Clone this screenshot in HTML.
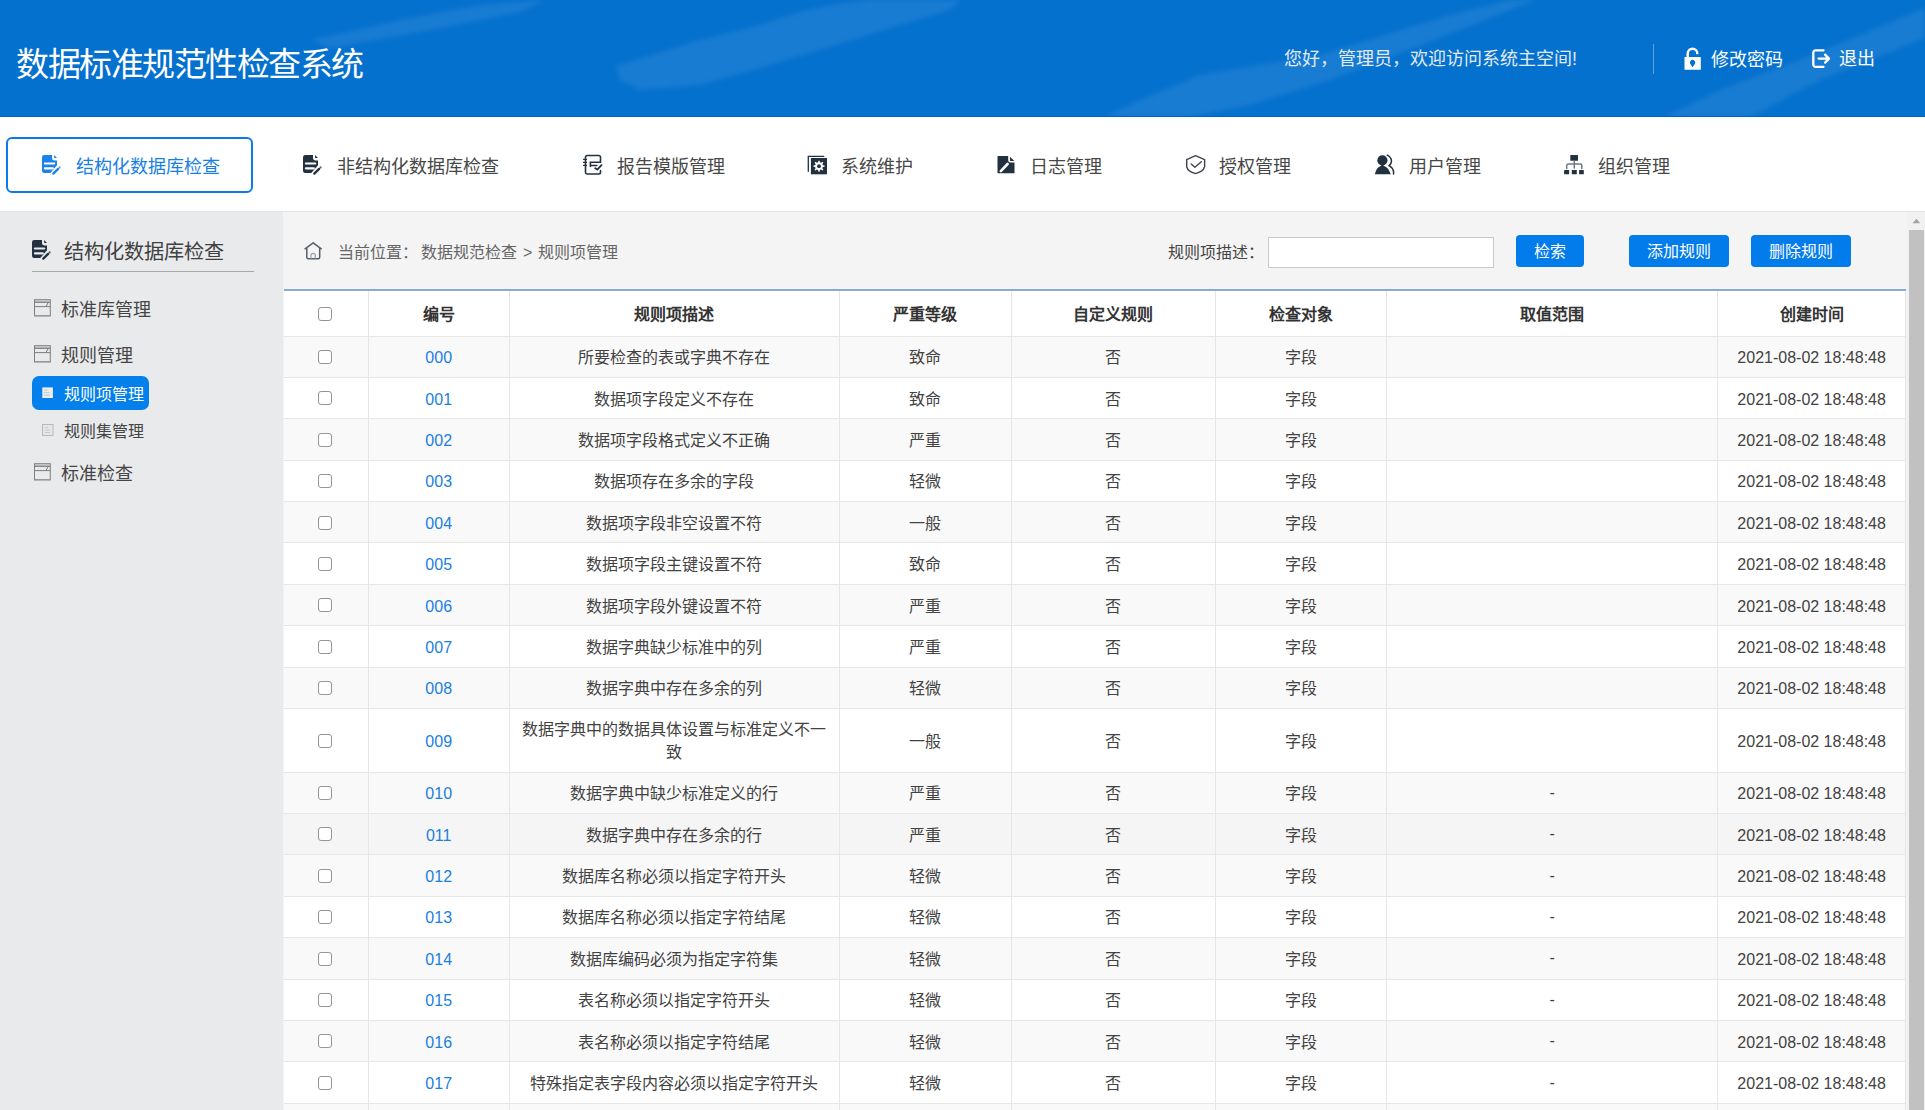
<!DOCTYPE html>
<html lang="zh-CN"><head><meta charset="utf-8">
<style>
*{box-sizing:border-box}
html,body{margin:0;padding:0;width:1925px;height:1110px;overflow:hidden;font-family:"Liberation Sans",sans-serif;background:#f4f4f4}
.abs{position:absolute;white-space:nowrap}
#hdr{position:absolute;left:0;top:0;width:1925px;height:117px;background:#0571ce;overflow:hidden;border-bottom:1px solid #0061c6}
#hdr svg.bg{position:absolute;left:0;top:0}
#title{left:16px;top:40.5px;font-size:33px;letter-spacing:-1.5px;color:#fff;line-height:48px}
.hw{font-size:18px;color:#e2eaf4;line-height:26px}
#nav{position:absolute;left:0;top:117px;width:1925px;height:95px;background:#fff;border-bottom:1px solid #e5e5e6}
.tab{font-size:18px;color:#474747;line-height:26px}
#act{position:absolute;left:6px;top:137px;width:247px;height:56px;border:2px solid #0b7be9;border-radius:6px}
#side{position:absolute;left:0;top:212px;width:283px;height:898px;background:#e9eaec}
.si{font-size:18px;color:#454545;line-height:26px}
#main{position:absolute;left:283px;top:212px;width:1624px;height:898px;background:#f4f4f4}
.btn{position:absolute;top:235px;height:32px;background:#037ceb;border-radius:4px;color:#fff;font-size:16px;line-height:34px;text-align:center}
#tbl{position:absolute;left:284px;top:289px;border-collapse:collapse;table-layout:fixed;border-top:2px solid #86abd8;background:#fff}
#tbl td,#tbl th{border:1px solid #e6e6e6;padding:2px 0 0 0;text-align:center;font-size:16px;color:#424242;line-height:23px;white-space:nowrap;overflow:hidden}
#tbl th{height:46px;font-weight:bold;border-top:none;color:#333;padding-top:3px}
#tbl tr.odd td{background:#f9f9f9}
#tbl tr.even td{background:#fff}
#tbl tr.hov td{background:#f5f5f5}
#tbl td:first-child,#tbl th:first-child{border-left:none}
#tbl td{height:41.4px}
#tbl tr.tall td{height:63.6px}
#tbl td.lnk{color:#1a7fe0}
.dash{position:relative;top:-1.5px}
.cb{display:inline-block;position:relative;left:-1px;top:-2px;width:14px;height:14px;border:1px solid #959595;border-radius:3px;background:#fff;vertical-align:middle}
#sb{position:absolute;left:1907px;top:212px;width:18px;height:898px;background:#f1f1f1}
#thumb{position:absolute;left:1909px;top:230px;width:15px;height:880px;background:#c1c1c1}
</style></head><body>

<div id="hdr">
<svg class="bg" width="1925" height="117" viewBox="0 0 1925 117">
  <defs><filter id="bl"><feGaussianBlur stdDeviation="2"/></filter></defs>
  <g fill="#ffffff" fill-opacity="0.075" filter="url(#bl)">
    <path d="M312 40 L400 20 L480 5 L545 0 L520 12 L420 32 L330 48 Z"/>
    <path d="M616 66 L700 40 L760 25 L800 12 L830 5 L870 0 L960 0 L950 10 L900 25 L820 50 L760 68 L700 85 L640 90 L620 80 Z"/>
    <path d="M1105 117 L1140 100 L1200 75 L1320 55 L1450 15 L1510 0 L1535 0 L1460 30 L1330 80 L1250 105 L1190 117 Z"/>
    <path d="M1664 117 L1720 90 L1800 60 L1925 8 L1925 38 L1820 80 L1750 117 Z"/>
  </g>
</svg>
</div>
<div id="title" class="abs">数据标准规范性检查系统</div>
<div class="abs hw" style="left:1284px;top:46px">您好，管理员，欢迎访问系统主空间!</div>
<div class="abs" style="left:1653px;top:44px;width:1px;height:30px;background:rgba(255,255,255,0.35)"></div>
<svg class="abs" style="left:1678px;top:44px" width="28" height="30" viewBox="0 0 28 30">
  <path d="M9.7 13.5 V9.5 A4.8 4.8 0 0 1 19.3 9.5 V10.3" fill="none" stroke="#fff" stroke-width="2.4"/>
  <path d="M6.5 13.1 H22.8 V25.7 H6.5 Z M14.6 15.8 A2.7 2.7 0 0 0 12.6 20.3 L14.6 23.2 L16.6 20.3 A2.7 2.7 0 0 0 14.6 15.8 Z" fill="#fff" fill-rule="evenodd"/>
</svg>
<div class="abs hw" style="left:1711px;top:47px;color:#fff">修改密码</div>
<svg class="abs" style="left:1806px;top:44px" width="30" height="30" viewBox="0 0 30 30">
  <path d="M17.5 6.4 H9.5 A2.2 2.2 0 0 0 7.3 8.6 V20.6 A2.2 2.2 0 0 0 9.5 22.8 H17.5" fill="none" stroke="#fff" stroke-width="2.3" stroke-linecap="round"/>
  <path d="M12.6 14.6 H22.5 M19.1 10.6 L23 14.6 L19.1 18.6" fill="none" stroke="#fff" stroke-width="2.3" stroke-linecap="round" stroke-linejoin="round"/>
</svg>
<div class="abs hw" style="left:1839px;top:46px;color:#fff">退出</div>

<div id="nav"></div>
<div id="act"></div>
<svg class="abs" style="left:37px;top:150px" width="30" height="30" viewBox="0 0 30 30"><path d="M7.2 5 H15 V7.8 A2.6 2.6 0 0 0 17.6 10.4 H20 V15.3 L13.3 23 H7.2 A2.2 2.2 0 0 1 5 20.8 V7.2 A2.2 2.2 0 0 1 7.2 5 Z" fill="#1a82e8"/><path d="M17.1 5.1 L20 8 H17.1 Z" fill="#1a82e8"/><path d="M7.9 13.5 H17.2 M7.9 18.3 H15.8" stroke="#fff" stroke-width="2.2" stroke-linecap="round"/><path d="M16.3 23.6 L21.1 18.9" stroke="#1a82e8" stroke-width="2.3" stroke-linecap="round"/><circle cx="22.6" cy="17.4" r="1.05" fill="#1a82e8" fill-opacity="0.75"/></svg>
<div class="abs tab" style="left:76px;top:154px;color:#1a7fe3">结构化数据库检查</div>
<svg class="abs" style="left:298px;top:150px" width="30" height="30" viewBox="0 0 30 30"><path d="M7.2 5 H15 V7.8 A2.6 2.6 0 0 0 17.6 10.4 H20 V15.3 L13.3 23 H7.2 A2.2 2.2 0 0 1 5 20.8 V7.2 A2.2 2.2 0 0 1 7.2 5 Z" fill="#22303f"/><path d="M17.1 5.1 L20 8 H17.1 Z" fill="#22303f"/><path d="M7.9 13.5 H17.2 M7.9 18.3 H15.8" stroke="#fff" stroke-width="2.2" stroke-linecap="round"/><path d="M16.3 23.6 L21.1 18.9" stroke="#22303f" stroke-width="2.3" stroke-linecap="round"/><circle cx="22.6" cy="17.4" r="1.05" fill="#22303f" fill-opacity="0.75"/></svg>
<div class="abs tab" style="left:337px;top:154px">非结构化数据库检查</div>
<svg class="abs" style="left:578px;top:150px" width="30" height="30" viewBox="0 0 30 30"><path d="M22.5 12.3 V7.2 A1.7 1.7 0 0 0 20.8 5.5 H9.2 A1.7 1.7 0 0 0 7.5 7.2 V22.3 A1.7 1.7 0 0 0 9.2 24 H20.8 A1.7 1.7 0 0 0 22.5 22.3 V20.6" stroke="#22303f" stroke-width="1.6" fill="none" stroke-linecap="round"/><path d="M22.5 12.3 H12.2 M12.4 12.6 V16.4 M12.4 15.5 H18.8" stroke="#22303f" stroke-width="1.6" fill="none" stroke-linecap="round"/><path d="M17.2 18.2 L19.3 19.6 L23.5 15.2" stroke="#22303f" stroke-width="1.8" fill="none" stroke-linecap="round" stroke-linejoin="round"/><path d="M5.6 9.4 H8.4 M5.6 12.4 H8.4 M5.6 15.4 H8.4" stroke="#22303f" stroke-width="1.4" stroke-linecap="round"/></svg>
<div class="abs tab" style="left:617px;top:154px">报告模版管理</div>
<svg class="abs" style="left:802px;top:150px" width="30" height="30" viewBox="0 0 30 30"><path d="M6.3 21.3 V6.3 H21.8" stroke="#22303f" stroke-width="1.3" fill="none" stroke-linecap="round"/><rect x="8.9" y="8" width="16.1" height="16.3" fill="#22303f"/><path d="M20.90 15.33 L22.56 15.53 L22.56 16.87 L20.90 17.07 L20.38 18.34 L21.41 19.66 L20.46 20.61 L19.14 19.58 L17.87 20.10 L17.67 21.76 L16.33 21.76 L16.13 20.10 L14.86 19.58 L13.54 20.61 L12.59 19.66 L13.62 18.34 L13.10 17.07 L11.44 16.87 L11.44 15.53 L13.10 15.33 L13.62 14.06 L12.59 12.74 L13.54 11.79 L14.86 12.82 L16.13 12.30 L16.33 10.64 L17.67 10.64 L17.87 12.30 L19.14 12.82 L20.46 11.79 L21.41 12.74 L20.38 14.06 Z" fill="#fff"/><circle cx="17" cy="16.2" r="1.9" fill="#22303f"/></svg>
<div class="abs tab" style="left:841px;top:154px">系统维护</div>
<svg class="abs" style="left:991px;top:150px" width="30" height="30" viewBox="0 0 30 30"><path d="M7 6 H17.2 V10.3 A2.2 2.2 0 0 0 19.4 12.5 H23.5 V22.7 A.5 .5 0 0 1 23 23.2 H7 A.5 .5 0 0 1 6.5 22.7 V6.5 A.5 .5 0 0 1 7 6 Z" fill="#22303f"/><path d="M19 6.7 L23.3 11 H19.6 A.6 .6 0 0 1 19 10.4 Z" fill="#22303f"/><path d="M9.8 21.1 L16.6 14" stroke="#fff" stroke-width="2.6" stroke-linecap="round"/></svg>
<div class="abs tab" style="left:1030px;top:154px">日志管理</div>
<svg class="abs" style="left:1180px;top:150px" width="30" height="30" viewBox="0 0 30 30"><path d="M15.5 5.7 L6.7 9.6 V17 Q8 21.6 15.5 23.6 Q23 21.6 24.6 17 V9.6 Z" stroke="#42434f" stroke-width="1.45" fill="none" stroke-linejoin="round"/><path d="M11.3 14 L14.9 17.2 L21.3 11.8" stroke="#42434f" stroke-width="1.45" fill="none" stroke-linecap="round" stroke-linejoin="round"/></svg>
<div class="abs tab" style="left:1219px;top:154px">授权管理</div>
<svg class="abs" style="left:1369px;top:150px" width="30" height="30" viewBox="0 0 30 30"><circle cx="13.4" cy="10.3" r="5.1" fill="#22303f"/><path d="M5.8 24.2 Q7.6 17.4 11.2 16.2 L13.4 14.6 L15.6 16.2 Q19.2 17.4 21.8 24.2 Z" fill="#22303f"/><path d="M18.2 5.1 Q22.4 7.4 22.5 11 Q22.4 14 20.1 15.6 Q23.9 17.8 24.6 21.5 L24.5 24" stroke="#22303f" stroke-width="1.5" fill="none" stroke-linecap="round"/></svg>
<div class="abs tab" style="left:1409px;top:154px">用户管理</div>
<svg class="abs" style="left:1559px;top:150px" width="30" height="30" viewBox="0 0 30 30"><rect x="11.3" y="5" width="7.7" height="5.8" rx=".6" fill="#22303f"/><path d="M15.3 11 V18 M7.7 18.5 V15.6 Q7.7 14.1 9.2 14.1 H21.3 Q22.8 14.1 22.8 15.6 V18.5" stroke="#6d7785" stroke-width="1.5" fill="none" stroke-linecap="round"/><rect x="5.1" y="20" width="5" height="4.3" rx=".6" fill="#22303f"/><rect x="12.8" y="20" width="5" height="4.3" rx=".6" fill="#22303f"/><rect x="20.1" y="20" width="4.7" height="4.3" rx=".6" fill="#22303f"/></svg>
<div class="abs tab" style="left:1598px;top:154px">组织管理</div>

<div id="side"></div>
<svg class="abs" style="left:26.7px;top:234.8px" width="30" height="30" viewBox="0 0 30 30"><path d="M7.2 5 H15 V7.8 A2.6 2.6 0 0 0 17.6 10.4 H20 V15.3 L13.3 23 H7.2 A2.2 2.2 0 0 1 5 20.8 V7.2 A2.2 2.2 0 0 1 7.2 5 Z" fill="#22303f"/><path d="M17.1 5.1 L20 8 H17.1 Z" fill="#22303f"/><path d="M7.9 13.5 H17.2 M7.9 18.3 H15.8" stroke="#e9eaec" stroke-width="2.2" stroke-linecap="round"/><path d="M16.3 23.6 L21.1 18.9" stroke="#22303f" stroke-width="2.3" stroke-linecap="round"/><circle cx="22.6" cy="17.4" r="1.05" fill="#22303f" fill-opacity="0.75"/></svg>
<div class="abs" style="left:63.5px;top:236.5px;font-size:20.2px;line-height:30px;color:#404040">结构化数据库检查</div>
<div class="abs" style="left:32px;top:271px;width:222px;height:1px;background:#a9a9a9"></div>
<svg class="abs" style="left:28px;top:293px" width="30" height="30" viewBox="0 0 30 30"><rect x="6.5" y="6.7" width="15.8" height="16.2" fill="none" stroke="#7d7d7d" stroke-width="1"/><rect x="7" y="7.2" width="14.8" height="2.2" fill="#bdbdbd"/><path d="M6.5 9.4 H22.3 M6.5 13.6 H22.3" stroke="#7d7d7d" stroke-width="1"/><path d="M6.5 22.6 H22.3" stroke="#999" stroke-width="1.2"/><path d="M18.2 13.2 L20 9.9" stroke="#777" stroke-width="1"/></svg>
<div class="abs si" style="left:61px;top:296.5px">标准库管理</div>
<svg class="abs" style="left:28px;top:339px" width="30" height="30" viewBox="0 0 30 30"><rect x="6.5" y="6.7" width="15.8" height="16.2" fill="none" stroke="#7d7d7d" stroke-width="1"/><rect x="7" y="7.2" width="14.8" height="2.2" fill="#bdbdbd"/><path d="M6.5 9.4 H22.3 M6.5 13.6 H22.3" stroke="#7d7d7d" stroke-width="1"/><path d="M6.5 22.6 H22.3" stroke="#999" stroke-width="1.2"/><path d="M18.2 13.2 L20 9.9" stroke="#777" stroke-width="1"/></svg>
<div class="abs si" style="left:61px;top:342.5px">规则管理</div>
<svg class="abs" style="left:28px;top:457px" width="30" height="30" viewBox="0 0 30 30"><rect x="6.5" y="6.7" width="15.8" height="16.2" fill="none" stroke="#7d7d7d" stroke-width="1"/><rect x="7" y="7.2" width="14.8" height="2.2" fill="#bdbdbd"/><path d="M6.5 9.4 H22.3 M6.5 13.6 H22.3" stroke="#7d7d7d" stroke-width="1"/><path d="M6.5 22.6 H22.3" stroke="#999" stroke-width="1.2"/><path d="M18.2 13.2 L20 9.9" stroke="#777" stroke-width="1"/></svg>
<div class="abs si" style="left:61px;top:460.5px">标准检查</div>
<div class="abs" style="left:32px;top:376px;width:117px;height:34px;background:#0380ec;border-radius:7px"></div>
<svg class="abs" style="left:40px;top:385px" width="15" height="15" viewBox="0 0 15 15"><rect x="2.3" y="2.4" width="10.6" height="10.6" fill="#eceef1"/><path d="M4 5.2 H7.5 M4 7.7 H9.5 M4 10.2 H10" stroke="#c4c6ca" stroke-width="1"/></svg>
<div class="abs" style="left:64px;top:382.5px;font-size:16px;line-height:24px;color:#fff">规则项管理</div>
<svg class="abs" style="left:40px;top:422px" width="15" height="15" viewBox="0 0 15 15"><rect x="2.5" y="2.5" width="10.5" height="11" fill="#e6e7e9" stroke="#b9b9b9" stroke-width="1"/><path d="M4.5 5.5 H8 M4.5 8 H10 M4.5 10.5 H10" stroke="#c8c8c8" stroke-width="1"/></svg>
<div class="abs" style="left:64px;top:420px;font-size:16px;line-height:24px;color:#444">规则集管理</div>

<div id="main"></div>
<svg class="abs" style="left:298px;top:236px" width="30" height="30" viewBox="0 0 30 30"><path d="M7 12.8 L15.2 6.8 L23.3 12.8" stroke="#56606b" stroke-width="1.5" fill="none" stroke-linecap="round" stroke-linejoin="round"/><path d="M8.8 12 V21.3 A1.5 1.5 0 0 0 10.3 22.8 H20.2 A1.5 1.5 0 0 0 21.7 21.3 V12" stroke="#56606b" stroke-width="1.5" fill="none"/><path d="M12.9 22.5 V19.6 A2.2 2.2 0 0 1 17.3 19.6 V22.5" stroke="#9aa2ab" stroke-width="1.2" fill="none"/></svg>
<div class="abs" style="left:338px;top:241px;font-size:16px;line-height:24px;color:#666">当前位置：</div>
<div class="abs" style="left:421px;top:241px;font-size:16px;line-height:24px;color:#666;word-spacing:1.5px">数据规范检查 &gt; 规则项管理</div>
<div class="abs" style="left:1168px;top:241px;font-size:16px;line-height:24px;color:#444">规则项描述：</div>
<div class="abs" style="left:1268px;top:237px;width:226px;height:31px;background:#fff;border:1px solid #c9c9c9"></div>
<div class="btn" style="left:1516px;width:68px">检索</div>
<div class="btn" style="left:1629px;width:100px">添加规则</div>
<div class="btn" style="left:1751px;width:100px">删除规则</div>

<table id="tbl">
<colgroup><col style="width:84px"><col style="width:141.4px"><col style="width:329.8px"><col style="width:172px"><col style="width:204.3px"><col style="width:171.5px"><col style="width:330.3px"><col style="width:188.7px"></colgroup>
<tr><th><span class="cb"></span></th><th>编号</th><th>规则项描述</th><th>严重等级</th><th>自定义规则</th><th>检查对象</th><th>取值范围</th><th>创建时间</th></tr>
<tr class="odd"><td><span class="cb"></span></td><td class="lnk">000</td><td>所要检查的表或字典不存在</td><td>致命</td><td>否</td><td>字段</td><td></td><td>2021-08-02 18:48:48</td></tr>
<tr class="even"><td><span class="cb"></span></td><td class="lnk">001</td><td>数据项字段定义不存在</td><td>致命</td><td>否</td><td>字段</td><td></td><td>2021-08-02 18:48:48</td></tr>
<tr class="odd"><td><span class="cb"></span></td><td class="lnk">002</td><td>数据项字段格式定义不正确</td><td>严重</td><td>否</td><td>字段</td><td></td><td>2021-08-02 18:48:48</td></tr>
<tr class="even"><td><span class="cb"></span></td><td class="lnk">003</td><td>数据项存在多余的字段</td><td>轻微</td><td>否</td><td>字段</td><td></td><td>2021-08-02 18:48:48</td></tr>
<tr class="odd"><td><span class="cb"></span></td><td class="lnk">004</td><td>数据项字段非空设置不符</td><td>一般</td><td>否</td><td>字段</td><td></td><td>2021-08-02 18:48:48</td></tr>
<tr class="even"><td><span class="cb"></span></td><td class="lnk">005</td><td>数据项字段主键设置不符</td><td>致命</td><td>否</td><td>字段</td><td></td><td>2021-08-02 18:48:48</td></tr>
<tr class="odd"><td><span class="cb"></span></td><td class="lnk">006</td><td>数据项字段外键设置不符</td><td>严重</td><td>否</td><td>字段</td><td></td><td>2021-08-02 18:48:48</td></tr>
<tr class="even"><td><span class="cb"></span></td><td class="lnk">007</td><td>数据字典缺少标准中的列</td><td>严重</td><td>否</td><td>字段</td><td></td><td>2021-08-02 18:48:48</td></tr>
<tr class="odd"><td><span class="cb"></span></td><td class="lnk">008</td><td>数据字典中存在多余的列</td><td>轻微</td><td>否</td><td>字段</td><td></td><td>2021-08-02 18:48:48</td></tr>
<tr class="even tall"><td><span class="cb"></span></td><td class="lnk">009</td><td>数据字典中的数据具体设置与标准定义不一<br>致</td><td>一般</td><td>否</td><td>字段</td><td></td><td>2021-08-02 18:48:48</td></tr>
<tr class="odd"><td><span class="cb"></span></td><td class="lnk">010</td><td>数据字典中缺少标准定义的行</td><td>严重</td><td>否</td><td>字段</td><td><span class="dash">-</span></td><td>2021-08-02 18:48:48</td></tr>
<tr class="hov"><td><span class="cb"></span></td><td class="lnk">011</td><td>数据字典中存在多余的行</td><td>严重</td><td>否</td><td>字段</td><td><span class="dash">-</span></td><td>2021-08-02 18:48:48</td></tr>
<tr class="odd"><td><span class="cb"></span></td><td class="lnk">012</td><td>数据库名称必须以指定字符开头</td><td>轻微</td><td>否</td><td>字段</td><td><span class="dash">-</span></td><td>2021-08-02 18:48:48</td></tr>
<tr class="even"><td><span class="cb"></span></td><td class="lnk">013</td><td>数据库名称必须以指定字符结尾</td><td>轻微</td><td>否</td><td>字段</td><td><span class="dash">-</span></td><td>2021-08-02 18:48:48</td></tr>
<tr class="odd"><td><span class="cb"></span></td><td class="lnk">014</td><td>数据库编码必须为指定字符集</td><td>轻微</td><td>否</td><td>字段</td><td><span class="dash">-</span></td><td>2021-08-02 18:48:48</td></tr>
<tr class="even"><td><span class="cb"></span></td><td class="lnk">015</td><td>表名称必须以指定字符开头</td><td>轻微</td><td>否</td><td>字段</td><td><span class="dash">-</span></td><td>2021-08-02 18:48:48</td></tr>
<tr class="odd"><td><span class="cb"></span></td><td class="lnk">016</td><td>表名称必须以指定字符结尾</td><td>轻微</td><td>否</td><td>字段</td><td><span class="dash">-</span></td><td>2021-08-02 18:48:48</td></tr>
<tr class="even"><td><span class="cb"></span></td><td class="lnk">017</td><td>特殊指定表字段内容必须以指定字符开头</td><td>轻微</td><td>否</td><td>字段</td><td><span class="dash">-</span></td><td>2021-08-02 18:48:48</td></tr>
<tr class="odd"><td><span class="cb"></span></td><td class="lnk">018</td><td>特殊指定表字段内容必须以指定字符结尾</td><td>轻微</td><td>否</td><td>字段</td><td><span class="dash">-</span></td><td>2021-08-02 18:48:48</td></tr>
</table>

<div id="sb"></div>
<div id="thumb"></div>
<svg class="abs" style="left:1907px;top:212px" width="18" height="18" viewBox="0 0 18 18"><path d="M5.5 11.2 L9.4 6.8 L13.3 11.2 Z" fill="#a3a3a3"/></svg>

</body></html>
